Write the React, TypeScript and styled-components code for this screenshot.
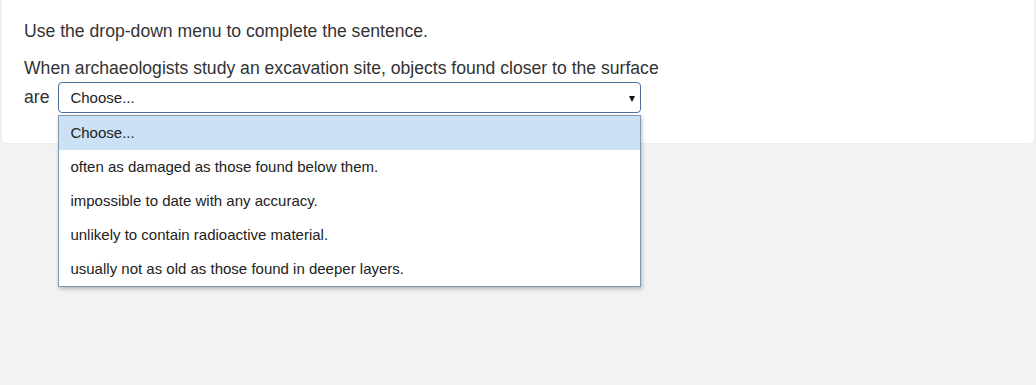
import React from "react";
import styled, { createGlobalStyle } from "styled-components";

const GlobalStyle = createGlobalStyle`
  html, body {
    margin: 0;
    padding: 0;
    background: #f2f2f2;
    font-family: "Liberation Sans", Arial, sans-serif;
  }
`;

const Page = styled.div`
  width: 1036px;
  height: 385px;
  background: #f2f2f2;
`;

const Card = styled.div`
  margin: 0 2px;
  height: 143px;
  box-sizing: border-box;
  padding: 20px 22px;
  background: #ffffff;
  border-radius: 0 0 4px 4px;
  box-shadow: 0 0 2px rgba(0, 0, 0, 0.08);
`;

const Instruction = styled.p`
  margin: 0 0 12px;
  font-size: 17.6px;
  line-height: 22px;
  color: #333333;
`;

const Sentence = styled.p`
  margin: 0;
  font-size: 17.6px;
  line-height: 28px;
  color: #333333;
`;

const NoWrap = styled.span`
  white-space: nowrap;
`;

const SelectWrap = styled.span`
  position: relative;
  display: inline-block;
  margin-left: 9px;
`;

const SelectBox = styled.span`
  display: flex;
  align-items: center;
  justify-content: space-between;
  box-sizing: border-box;
  width: 583px;
  height: 31px;
  padding: 0 5px 0 11px;
  border: 1px solid #4e6e9c;
  border-radius: 4px;
  background: #ffffff;
  font-size: 15px;
  color: #222222;
`;

const Caret = styled.span`
  width: 0;
  height: 0;
  border-left: 3px solid transparent;
  border-right: 3px solid transparent;
  border-top: 6px solid #111111;
  margin-top: 2px;
`;

const Menu = styled.ul`
  position: absolute;
  left: 0;
  top: calc(100% + 2px);
  box-sizing: border-box;
  width: 583px;
  margin: 0;
  padding: 0;
  list-style: none;
  background: #ffffff;
  border: 1px solid #8196b0;
  box-shadow: 1px 2px 4px rgba(0, 0, 0, 0.25);
  z-index: 10;
  white-space: nowrap;
`;

const Option = styled.li<{ $active?: boolean }>`
  height: 34px;
  line-height: 34px;
  padding-left: 11px;
  font-size: 15px;
  color: #222222;
  background: ${({ $active }) => ($active ? "#cce1f6" : "#ffffff")};
`;

const options = [
  "Choose...",
  "often as damaged as those found below them.",
  "impossible to date with any accuracy.",
  "unlikely to contain radioactive material.",
  "usually not as old as those found in deeper layers.",
];

export default function App() {
  return (
    <Page>
      <GlobalStyle />
      <Card>
        <Instruction>Use the drop-down menu to complete the sentence.</Instruction>
        <Sentence>
          When archaeologists study an excavation site, objects found closer to the surface{" "}
          <NoWrap>
            are
            <SelectWrap>
              <SelectBox>
                Choose...
                <Caret />
              </SelectBox>
              <Menu>
                {options.map((o, i) => (
                  <Option key={o} $active={i === 0}>
                    {o}
                  </Option>
                ))}
              </Menu>
            </SelectWrap>
          </NoWrap>
        </Sentence>
      </Card>
    </Page>
  );
}
